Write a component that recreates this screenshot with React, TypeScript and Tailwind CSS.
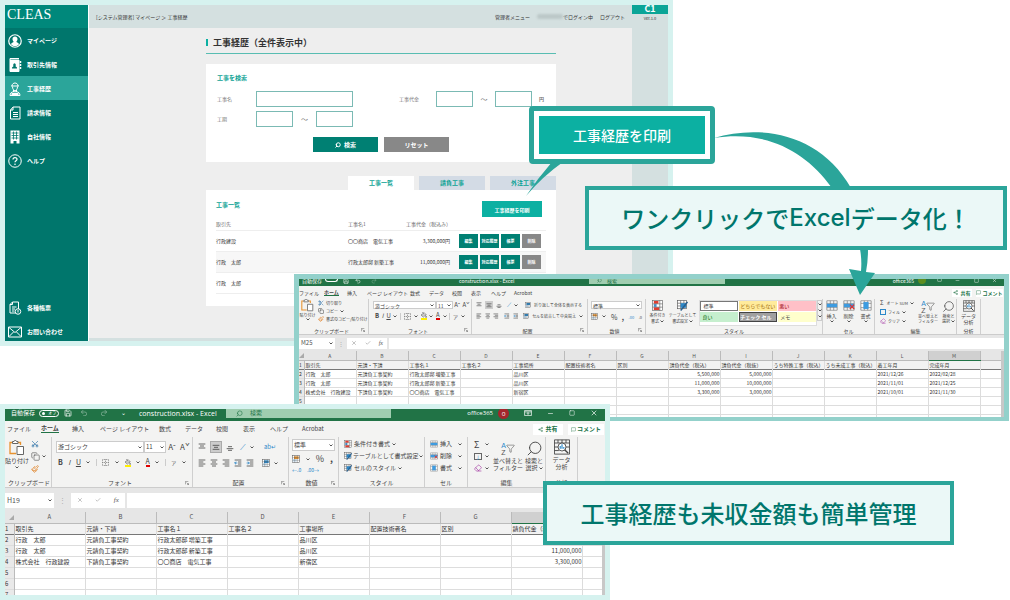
import React from "react";
import { Search, Save, Undo2, Redo2, Scissors, Copy, Paintbrush, X, Check, Minus, Square, Share2, MessageSquare, Eraser, Funnel, PaintBucket } from "lucide-react";

const jp = "font-['Noto_Sans_CJK_JP',sans-serif]";

/* ---------- small drawings ---------- */

function SideIcon({ name }: { name: string }) {
  const common = { viewBox: "0 0 28 28", fill: "none", stroke: "white", strokeWidth: 2, className: "size-[14px] shrink-0" };
  switch (name) {
    case "user":
      return (
        <svg {...common}>
          <circle cx="14" cy="14" r="12.5" strokeWidth="2.4" />
          <path d="M6 20.5c1-3 4-3.500 5.500-4.500-1.500-1.500-2.500-4-2.500-6C9 7 11 5 14 5s5 2 5 5c0 2-1 4.500-2.500 6 1.500 1 4.500 1.500 5.500 4.500-2 2.500-5 4-8 4s-6-1.500-8-4z" fill="white" stroke="none" />
        </svg>
      );
    case "book":
      return (
        <svg {...common}>
          <path d="M4 4V1h18" />
          <path d="M4 4h18v23H4z" fill="white" />
          <path d="M25 6v4M25 12v4M25 18v4" strokeWidth="3" />
          <path d="M8 21v-2l3-2.500c-1-1-1-6 2-6s3 5 2 6l3 2.500v2z" fill="#00766c" stroke="none" />
        </svg>
      );
    case "worker":
      return (
        <svg {...common}>
          <path d="M8 8c0-8 12-8 12 0M6 8h16M9 9c0 11 10 11 10 0M11 16v4M17 16v4M4 27c0-5 3-7 7-7.500h6c4 .5 7 2.500 7 7.500z" />
          <path d="M7 22h14v4H7z" fill="white" stroke="none" />
        </svg>
      );
    case "invoice":
      return (
        <svg {...common}>
          <path d="M10 2h14v24H5V8zM10 2v6H5M10 13h10M10 17h10M10 21h10" />
        </svg>
      );
    case "building":
      return (
        <svg {...common}>
          <path d="M5 1h18v26h-6v-5h-6v5H5z" fill="white" stroke="none" />
          <path d="M7 6h14M7 11h14M7 16h14M11 3v16M17 3v16" stroke="#00766c" strokeWidth="1.600" />
        </svg>
      );
    case "help":
      return (
        <svg {...common}>
          <circle cx="14" cy="14" r="12.500" />
          <path d="M10 11c0-5 8-5 8-.5 0 3-4 3-4 6" strokeWidth="2.500" />
          <circle cx="14" cy="20.500" r="1.600" fill="white" stroke="none" />
        </svg>
      );
    case "report":
      return (
        <svg {...common}>
          <path d="M16 24H4V7l5-5h12v14M9 2v5H4M8 12h9M8 16h6M8 20h5" />
          <circle cx="20" cy="21" r="5.500" />
          <path d="M20 18v5" />
        </svg>
      );
    default:
      return (
        <svg {...common}>
          <path d="M1 4h26v20H1zM2 5l12 10L26 5M2 23l9-9M26 23l-9-9" />
        </svg>
      );
  }
}

function Lines({ mode }: { mode: "top" | "mid" | "bot" | "left" | "center" | "right" | "indent" | "outdent" }) {
  const d: Record<string, string> = {
    top: "M1 1.500h10M3 4.500h6M1 7.500h10",
    mid: "M1 3.500h10M3 6.500h6M1 9.500h10",
    bot: "M3 5.500h6M1 8.500h10M3 11h6",
    left: "M1 1.500h10M1 4.500h7M1 7.500h10M1 10.500h7",
    center: "M1 1.500h10M3 4.500h6M1 7.500h10M3 10.500h6",
    right: "M1 1.500h10M4 4.500h7M1 7.500h10M4 10.500h7",
    indent: "M1 1.500h10M6 4.500h5M6 7.500h5M1 10.500h10",
    outdent: "M1 1.500h10M6 4.500h5M6 7.500h5M1 10.500h10",
  };
  return (
    <svg viewBox="0 0 12 12" className="size-full" fill="none" stroke="#444" strokeWidth="1.200">
      <path d={d[mode]} />
      {mode === "indent" && <path d="M5 6H1l2-2M1 6l2 2" stroke="#1e7fc4" />}
      {mode === "outdent" && <path d="M1 6h4L3 4M5 6L3 8" stroke="#1e7fc4" />}
    </svg>
  );
}

function Grid({ a = "#2b88c9", b = "#cfe6f7" }: { a?: string; b?: string }) {
  return (
    <svg viewBox="0 0 12 12" className="size-full" fill="none" stroke="#555" strokeWidth="0.800">
      <rect x="0.500" y="0.500" width="11" height="11" fill="white" />
      <rect x="3" y="2" width="7" height="4" fill={a} stroke="none" />
      <rect x="1" y="6" width="6" height="4" fill={b} stroke="none" />
      <path d="M.5 4h11M.5 8h11M4 .5v11M8 .5v11" strokeWidth="0.500" />
    </svg>
  );
}

function ConditionalIcon() {
  return (
    <svg viewBox="0 0 12 12" className="size-full" fill="none" stroke="#666" strokeWidth="0.700">
      <rect x="0.500" y="0.500" width="11" height="11" fill="white" />
      <path d="M2 1h5v3H2zM2 8h6v3H2z" fill="#e03c31" stroke="none" />
      <path d="M2 4.500h3v3H2z" fill="#3d8fd0" stroke="none" />
      <path d="M.5 4.200h11M.5 7.800h11M8.500 .5v11" />
    </svg>
  );
}

function TableIcon() {
  return (
    <svg viewBox="0 0 12 12" className="size-full" fill="none" stroke="#555" strokeWidth="0.700">
      <rect x="0.500" y="0.500" width="10" height="9" fill="white" />
      <path d="M.5 3.500h10M.5 6.500h10M4 .5v9M7.500 .5v9" />
      <rect x="4" y="3.500" width="6" height="5" fill="#2b88c9" stroke="none" />
      <path d="M11.500 2L6 9l-2 2.500" stroke="#2b5f8c" strokeWidth="1.600" />
    </svg>
  );
}

function CellsIcon({ cut = false, col = false }: { cut?: boolean; col?: boolean }) {
  return (
    <svg viewBox="0 0 14 12" className="size-full" fill="none" stroke="#777" strokeWidth="0.800">
      <path d="M1 .5h12v11H1zM1 3.500h12M1 8.500h12M5 .5v11M9 .5v11" fill="white" />
      <rect x={col ? 4 : 1} y={col ? 2 : 4} width={col ? 6 : 12} height={col ? 8 : 4} fill="#3d9be0" stroke="none" />
      {cut && <path d="M8 5l5 5M13 5l-5 5" stroke="#d33" strokeWidth="1.500" />}
    </svg>
  );
}

function PasteIcon() {
  return (
    <svg viewBox="0 0 16 16" className="size-full" fill="none">
      <path d="M3 2.500H1v11h6" stroke="#e8922e" strokeWidth="1.300" />
      <path d="M9 2.500h2.500V5" stroke="#e8922e" strokeWidth="1.300" />
      <path d="M3.500 3.500v-2h1.500c0-1.500 2.500-1.500 2.500 0H9v2z" fill="white" stroke="#666" />
      <path d="M8 6.500h6.500v8H8z" fill="white" stroke="#666" />
    </svg>
  );
}

function AnalysisIcon() {
  return (
    <svg viewBox="0 0 18 18" className="size-full" fill="none" stroke="#444">
      <path d="M.5 1h17v16H.5zM.5 4.500h17M.5 9h4M13.500 9h4M.5 13h5M4.500 1v3.500M9 1v3.500M13.500 1v3.500" />
      <circle cx="9" cy="9" r="4.500" fill="white" />
      <path d="M7 11V8M9 11V6M11 11V9" stroke="#2b88c9" strokeWidth="1.300" />
      <path d="M12 12l4 4" strokeWidth="1.500" />
    </svg>
  );
}

function Caret() {
  return (
    <svg viewBox="0 0 4 3" className="h-[3px] w-[4px] shrink-0" fill="none" stroke="#555" strokeWidth="1">
      <path d="M.5 .5L2 2 3.500 .5" />
    </svg>
  );
}

function Launcher() {
  return (
    <svg viewBox="0 0 6 6" className="size-[4px]" fill="none" stroke="#777">
      <path d="M.5 5V.5H5M2.500 2.500l3 3M5.500 3v2.500H3" />
    </svg>
  );
}

function RibbonToggle() {
  return (
    <svg viewBox="0 0 10 8" className="h-[6px] w-[8px]" fill="none" stroke="white">
      <path d="M.5 .5h9v7h-9zM.5 2.500h9M5 6.500V3.500M3.500 5L5 3.500 6.500 5" />
    </svg>
  );
}

function AtoZ() {
  return (
    <span className="flex items-center font-['Liberation_Sans',sans-serif]">
      <span className="flex flex-col text-[7px] leading-[7px]">
        <span className="text-[#2b88c9]">A</span>
        <span className="text-[#555]">Z</span>
      </span>
      <Funnel className="size-[9px] text-[#555]" strokeWidth={1.500} />
    </span>
  );
}

function Box({ children, big = false }: { children: React.ReactNode; big?: boolean }) {
  return <span className={big ? "block size-[16px] shrink-0" : "block size-[8px] shrink-0"}>{children}</span>;
}

/* ---------- management page window ---------- */

const nav = [
  ["user", "マイページ"],
  ["book", "取引先情報"],
  ["worker", "工事経歴"],
  ["invoice", "請求情報"],
  ["building", "自社情報"],
  ["help", "ヘルプ"],
];
const navBottom = [
  ["report", "各種帳票"],
  ["mail", "お問い合わせ"],
];

function NavItem({ icon, label, active = false }: { icon: string; label: string; active?: boolean }) {
  return (
    <a
      href="#"
      className={
        "flex h-[24px] items-center gap-[5px] pt-px pl-[3px] text-[6px] font-bold leading-none whitespace-nowrap text-white " +
        (active ? "bg-[#2ba59a]" : "")
      }
    >
      <SideIcon name={icon} />
      {label}
    </a>
  );
}

const field = "h-[16px] min-w-0 border border-[#7bbab4] bg-white text-[6px]";
const list = [
  ["行政建設", "〇〇商店　電気工事", "3,300,000円"],
  ["行政　太郎", "行政太郎邸 新築工事", "11,000,000円"],
  ["行政　太郎", "行政太郎邸 増築工事", "5,500,000円"],
];
const actions = ["編集", "対応履歴", "帳票", "削除"];

function ManagementWindow() {
  return (
    <section className={"absolute top-0 left-0 flex h-[346px] w-[673px] overflow-hidden border-5 border-[#d6f2ef] bg-[#eeeeee] text-[#333] " + jp}>
      <nav className="flex w-[84px] shrink-0 flex-col border-r border-white bg-[#00766c]">
        <h1 className="flex h-[23px] shrink-0 items-center bg-[#00887b] pb-[4px] pl-[2px] font-['Liberation_Serif',serif] text-[14px] leading-none text-white">CLEAS</h1>
        {nav.map(([i, l]) => (
          <NavItem key={l} icon={i} label={l} active={i === "worker"} />
        ))}
        <div className="mt-auto -mb-[2px]">
          {navBottom.map(([i, l]) => (
            <NavItem key={l} icon={i} label={l} />
          ))}
        </div>
      </nav>
      <div className="flex min-w-0 flex-1 flex-col">
        <header className="flex h-[23px] shrink-0 items-center justify-between bg-[#d4e0e0] pr-[7px] pl-[7px] text-[5px] leading-none">
          <span>[システム管理者] マイページ ＞ 工事経歴</span>
          <span className="flex items-center">
            <a href="#">管理者メニュー</a>
            <span className="ml-[7px] h-[5px] w-[26px] rounded-full bg-[#bcc8c8] blur-[1px]" />
            <span className="mr-[7px]">でログイン中</span>
            <a href="#">ログアウト</a>
          </span>
        </header>
        <main className="flex-1 border-b-3 border-[#d4e0e0] pr-[76px] pl-[117px]">
          <div className="flex h-[26px] items-center gap-[5px] border-b border-[#58bdb2] pt-[3px]">
            <span className="h-[7px] w-[2px] bg-[#0cb0a2]" />
            <h2 className="text-[9px] leading-none font-bold">工事経歴（全件表示中）</h2>
          </div>
          <form className="mt-[10px] h-[98px] bg-white px-[11px] pt-[10px] text-[5px] text-[#777]" onSubmit={(e) => e.preventDefault()}>
            <h3 className="text-[6px] leading-[8px] font-bold text-[#0ca294]">工事を検索</h3>
            <div className="mt-[9px] flex items-center">
              <label htmlFor="name" className="w-[39px]">工事名</label>
              <input id="name" className={field + " w-[97px]"} />
              <label htmlFor="cost" className="ml-[46px] w-[37px]">工事代金</label>
              <input id="cost" className={field + " w-[37px]"} />
              <span className="w-[22px] text-center text-[7px]">～</span>
              <input aria-label="工事代金 上限" className={field + " w-[37px]"} />
              <span className="ml-[7px] font-bold">円</span>
            </div>
            <div className="mt-[4px] flex items-center">
              <label htmlFor="term" className="w-[39px]">工期</label>
              <input id="term" className={field + " w-[37px]"} />
              <span className="w-[23px] text-center text-[7px]">～</span>
              <input aria-label="工期 終了" className={field + " w-[37px]"} />
            </div>
            <div className="mt-[10px] flex justify-center gap-[6px] text-[6px] font-bold text-white">
              <button className="flex h-[15px] w-[65px] items-center justify-center gap-[3px] bg-[#008073]"><Search className="size-[6px] -scale-x-100" strokeWidth={4} />検索</button>
              <button type="reset" className="h-[15px] w-[65px] bg-[#888] leading-none">リセット</button>
            </div>
          </form>
          <div className="mt-[14px] flex justify-end gap-[5px] text-[6px] leading-none font-bold text-[#0ca294]">
            <button className="h-[14px] w-[66px] bg-white">工事一覧</button>
            <button className="h-[14px] w-[66px] bg-[#d3dbe5]">請負工事</button>
            <button className="h-[14px] w-[66px] bg-[#d3dbe5]">外注工事</button>
          </div>
          <div className="h-[116px] bg-white px-[10px] pt-[11px]">
            <div className="flex items-start justify-between pr-[4px]">
              <h3 className="text-[6px] leading-[8px] font-bold text-[#0ca294]">工事一覧</h3>
              <button className="h-[16px] w-[60px] bg-[#0cb0a2] text-[5px] leading-none font-bold text-white">工事経歴を印刷</button>
            </div>
            <table className="mt-px w-full table-fixed text-left text-[5px] leading-none">
              <colgroup>
                <col className="w-[132px]" />
                <col className="w-[54px]" />
                <col className="w-[48px]" />
                <col />
              </colgroup>
              <thead>
                <tr className="h-[12px] border-b border-[#eee] whitespace-nowrap text-[#666]">
                  <th className="p-0 font-normal">取引先</th>
                  <th className="p-0 font-normal">工事名1</th>
                  <th className="p-0 pl-[4px] font-normal">工事代金（税込み）</th>
                  <th className="p-0" />
                </tr>
              </thead>
              <tbody>
                {list.map((r, i) => (
                  <tr key={i} className={"h-[21px] border-b border-[#eee] whitespace-nowrap " + (i === 1 ? "bg-[#f7f7f7]" : "")}>
                    <td className="p-0">{r[0]}</td>
                    <td className="p-0">{r[1]}</td>
                    <td className="p-0 text-right">{r[2]}</td>
                    <td className="p-0 pl-[9px]">
                      <span className="flex gap-[2px]">
                        {actions.map((a) => (
                          <button key={a} className={"h-[14px] w-[19px] text-[4px] leading-none font-bold text-white " + (a === "削除" ? "bg-[#888]" : "bg-[#008073]")}>{a}</button>
                        ))}
                      </span>
                    </td>
                  </tr>
                ))}
              </tbody>
            </table>
          </div>
        </main>
      </div>
      <aside className="w-[36px] shrink-0 bg-[#d4e0e0] text-center">
        <div className="flex h-[9px] items-end justify-center bg-[#0aa597] text-[9px] leading-[10px] font-bold text-white">C1</div>
        <p className="pt-[2px] text-[4px] leading-[5px]">Ver.1.0</p>
      </aside>
    </section>
  );
}

/* ---------- spreadsheet parts ---------- */

type SheetProps = {
  cols: string[];
  rows: string[][];
  small?: boolean;
  active: string;
  blank: number;
};

function Sheet({ cols, rows, small = false, active, blank }: SheetProps) {
  const h = small ? "h-[9px]" : "h-[11px]";
  const all = [...rows, ...Array.from({ length: blank }, () => [] as string[])];
  return (
    <div className="flex flex-1 overflow-hidden">
      <table className={"w-full table-fixed border-collapse bg-white text-left whitespace-nowrap text-[#333] " + (small ? "text-[5px] leading-[7px]" : "text-[6px] leading-[8px]")}>
        <colgroup>
          <col className={small ? "w-[5px]" : "w-[9px]"} />
          {cols.map((c) => (
            <col key={c} className={small ? "w-[52px]" : "w-[71px]"} />
          ))}
          <col />
        </colgroup>
        <thead>
          <tr className={"border-b border-[#bbb] bg-[#e6e6e6] text-center text-[#555] " + h}>
            <th className="p-0">
              <svg viewBox="0 0 6 6" className="ml-auto size-[5px]" fill="#aaa"><path d="M6 0v6H0z" /></svg>
            </th>
            {cols.map((c) => (
              <th key={c} className={"border-r border-[#bbb] p-0 font-normal " + (c === active ? "border-b border-b-[#217346] bg-[#d0d0d0]" : "")}>{c}</th>
            ))}
            <th className="p-0" />
          </tr>
        </thead>
        <tbody>
          {all.map((r, i) => (
            <tr key={i} className={h + " " + (i === 0 ? "border-b border-[#777] bg-[#f2f2f2]" : "border-b border-[#ddd]")}>
              <th className="border-r border-[#bbb] bg-[#e9e9e9] p-0 font-normal">{i + 1}</th>
              {cols.map((c, j) => (
                <td key={c} className={"border-r border-[#dcdcdc] p-0 pl-px " + (i > 0 && (j === 7 || j === 8) ? "text-right" : "")}>{r[j] ?? ""}</td>
              ))}
              <td className="p-0" />
            </tr>
          ))}
        </tbody>
      </table>
      <div className="w-[3px] shrink-0 bg-[#c8c8c8]" />
    </div>
  );
}

function FormulaBar({ cell, small = false }: { cell: string; small?: boolean }) {
  return (
    <div className={"flex shrink-0 items-center border-t border-[#ccc] bg-[#e6e6e6] text-[#555] " + (small ? "h-[17px] text-[6px]" : "h-[25px] text-[7px]")}>
      <div className={"flex items-center justify-between bg-white px-[2px] leading-none " + (small ? "h-[11px] w-[36px]" : "h-[15px] w-[49px]")}>
        {cell}
        <Caret />
      </div>
      <span className={"text-center text-[#aaa] " + (small ? "w-[12px]" : "w-[17px]")}>⋮</span>
      <div className={"flex items-center justify-around bg-white " + (small ? "h-[11px] w-[40px]" : "h-[15px] w-[54px]")}>
        <X className="size-[6px] text-[#888]" />
        <Check className="size-[6px] text-[#888]" />
        <i className="font-['Liberation_Serif',serif]">fx</i>
      </div>
      <input aria-label="数式バー" className={"ml-[2px] min-w-0 flex-1 bg-white " + (small ? "h-[11px]" : "h-[15px]")} />
    </div>
  );
}

function Group({ label, className, children, launcher = true }: { label: string; className: string; children: React.ReactNode; launcher?: boolean }) {
  return (
    <div className={"flex shrink-0 flex-col border-r border-[#cfcfcf] " + className}>
      <div className="min-h-0 flex-1">{children}</div>
      <div className="flex h-[8px] shrink-0 items-center px-[3px] leading-none">
        <span className="flex-1 text-center whitespace-nowrap">{label}</span>
        {launcher && <Launcher />}
      </div>
    </div>
  );
}

const tabs = ["ファイル", "ホーム", "挿入", "ページ レイアウト", "数式", "データ", "校閲", "表示", "ヘルプ", "Acrobat"];

function TabRow({ small = false }: { small?: boolean }) {
  return (
    <div className={"flex shrink-0 items-center bg-[#f3f3f2] leading-none whitespace-nowrap text-[#444] " + (small ? "h-[13px] text-[5px]" : "h-[16px] text-[6px]")}>
      <div className={"grid flex-1 items-center " + (small ? "grid-cols-[25px_23px_20px_43px_19px_23px_19px_20px_23px_1fr]" : "grid-cols-[34px_31px_28px_59px_26px_31px_27px_27px_32px_1fr] pl-[2px]")}>
        {tabs.map((t) => (
          <button key={t} className={"justify-self-start " + (t === "ホーム" ? "border-b border-[#217346] pb-px font-bold" : "")}>{t}</button>
        ))}
      </div>
      <button className={"flex items-center justify-center gap-[2px] bg-white font-bold text-[#217346] " + (small ? "h-[8px] w-[20px]" : "h-[11px] w-[30px]")}>
        <Share2 className="size-[5px]" />共有
      </button>
      <button className={"flex items-center justify-center gap-[1px] bg-white font-bold text-[#217346] " + (small ? "mr-[1px] ml-[4px] h-[8px] w-[27px]" : "mr-[1px] ml-[5px] h-[11px] w-[36px]")}>
        <MessageSquare className="size-[5px]" />コメント
      </button>
    </div>
  );
}

function FontRows({ small = false }: { small?: boolean }) {
  const sel = "flex items-center justify-between border border-[#ccc] bg-white px-[1px] leading-none " + (small ? "h-[8px]" : "h-[12px]");
  return (
    <div className={"flex h-full flex-col pl-[4px] " + (small ? "gap-[3px] pt-[2px]" : "gap-[5px] pt-[4px]")}>
      <div className="flex items-center">
        <button className={sel + (small ? " w-[63px]" : " w-[88px]")}>游ゴシック<Caret /></button>
        <button className={sel + (small ? " w-[17px]" : " w-[22px]")}>11<Caret /></button>
        <span className={"flex flex-1 justify-around leading-none " + (small ? "text-[6px]" : "text-[8px]")}><span>Aˆ</span><span>Aˇ</span></span>
      </div>
      <div className={"flex items-center justify-between pr-[6px] pl-[2px] leading-none " + (small ? "text-[6px]" : "text-[7px]")}>
        <b>B</b><i>I</i><u>U</u><Caret />
        <span className="h-[7px] w-px bg-[#ccc]" />
        <span className="size-[7px]"><svg viewBox="0 0 8 8" fill="none" stroke="#777"><path d="M.5 .5h7v7h-7zM4 .5v7M.5 4h7" strokeDasharray="1 1" /></svg></span>
        <Caret />
        <span className="border-b-2 border-[#ffef00]"><PaintBucket className="size-[6px]" /></span><Caret />
        <span className="border-b-2 border-[#e00000]">A</span><Caret />
        <span className="h-[7px] w-px bg-[#ccc]" />
        <span className="text-[5px]">ア</span><Caret />
      </div>
    </div>
  );
}

function NumberSelect({ small = false }: { small?: boolean }) {
  return (
    <button className={"flex w-full items-center justify-between border border-[#ccc] bg-white px-[1px] leading-none " + (small ? "h-[8px]" : "h-[12px]")}>
      標準<Caret />
    </button>
  );
}

const headers = ["取引先", "元請・下請", "工事名１", "工事名２", "工事場所", "配置技術者名", "区別", "請負代金（税込）", "請負代金（税抜）", "うち特殊工事（税込）", "うち未成工事（税込）", "着工年月", "完成年月"];
const data = [
  headers,
  ["行政　太郎", "元請負工事契約", "行政太郎邸 増築工事", "", "品川区", "", "", "5,500,000", "5,000,000", "", "", "2021/12/26", "2022/02/28"],
  ["行政　太郎", "元請負工事契約", "行政太郎邸 新築工事", "", "品川区", "", "", "11,000,000", "10,000,000", "", "", "2021/11/01", "2021/12/25"],
  ["株式会社　行政建設", "下請負工事契約", "〇〇商店　電気工事", "", "新宿区", "", "", "3,300,000", "3,000,000", "", "", "2021/10/01", "2021/11/30"],
];

function WideSheetWindow() {
  return (
    <section className={"absolute top-[274px] left-[294px] flex h-[147px] w-[715px] flex-col overflow-hidden border-5 border-b-4 border-[#93d1cb] bg-white text-[5px] text-[#444] " + jp}>
      <div className="flex h-[7px] shrink-0 items-start bg-[#217346] leading-[3px] text-white">
        <span className="w-[26px] pl-[3px]">自動保存</span>
        <span className="h-[3px] w-[13px] rounded-b-full border border-t-0 border-white" />
        <Save className="-mt-px ml-[5px] size-[6px]" />
        <Undo2 className="-mt-px ml-[6px] size-[6px]" />
        <Redo2 className="-mt-px ml-[10px] size-[6px] opacity-40" />
        <span className="ml-[82px] w-[130px]">construction.xlsx - Excel</span>
        <span className="flex h-[5px] w-[136px] gap-[5px] bg-[#a0cdb0] pl-[8px] text-[#217346]"><Search className="-mt-px size-[5px] -scale-x-100" />検索</span>
        <span className="ml-auto">office365</span>
        <span className="mx-[4px] h-[5px] w-[8px] rounded-b-full bg-[#5c8d1f]" />
        <span className="flex w-[74px] items-start justify-around"><Square className="-mt-[2px] size-[5px]" /><Minus className="-mt-px size-[5px]" /><Square className="-mt-px size-[5px]" /><X className="-mt-px size-[5px]" /></span>
      </div>
      <TabRow small />
      <div className="flex h-[35px] shrink-0 bg-[#f3f3f2] leading-none whitespace-nowrap">
        <Group label="クリップボード" className="w-[70px]">
          <div className="flex gap-[3px] pl-px">
            <div className="flex w-[15px] flex-col items-center gap-[1px] text-[4px]"><span className="size-[13px]"><PasteIcon /></span>貼り付け<Caret /></div>
            <div className="flex flex-col gap-[2px] pt-px text-[4px]">
              <span className="flex items-center gap-[2px]"><Scissors className="size-[6px] text-[#2b6fa8]" />切り取り</span>
              <span className="flex items-center gap-[2px]"><Copy className="size-[6px]" />コピー<Caret /></span>
              <span className="flex items-center gap-[2px]"><Paintbrush className="size-[6px] text-[#e07b1a]" />書式のコピー/貼り付け</span>
            </div>
          </div>
        </Group>
        <Group label="フォント" className="w-[103px]"><FontRows small /></Group>
        <Group label="配置" className="w-[116px]">
          <div className="flex flex-col gap-[4px] px-[4px] pt-[2px]">
            <div className="flex items-center gap-[3px]">
              <span className="size-[6px]"><Lines mode="top" /></span><span className="size-[8px] bg-[#ccc] p-px"><Lines mode="mid" /></span><span className="size-[6px]"><Lines mode="bot" /></span>
              <span className="ml-[2px] text-[6px] text-[#2b88c9]">⟋</span><Caret />
              <span className="ml-[4px] size-[6px] shrink-0"><Grid /></span><span className="text-[4px]">折り返して全体を表示する</span>
            </div>
            <div className="flex items-center gap-[3px]">
              <span className="size-[6px]"><Lines mode="left" /></span><span className="size-[6px]"><Lines mode="center" /></span><span className="size-[6px]"><Lines mode="right" /></span>
              <span className="ml-[2px] size-[6px]"><Lines mode="indent" /></span><span className="size-[6px]"><Lines mode="outdent" /></span>
              <span className="ml-[2px] size-[6px] shrink-0"><Grid /></span><span className="text-[4px]">セルを結合して中央揃え</span><Caret />
            </div>
          </div>
        </Group>
        <Group label="数値" className="w-[58px]">
          <div className="flex flex-col gap-[4px] px-[3px] pt-[2px]">
            <NumberSelect small />
            <div className="flex items-center justify-between text-[7px] leading-[6px]"><span className="size-[7px]"><Grid a="#e8922e" /></span><Caret />%<b>,</b><span className="text-[4px] text-[#2b88c9]">.00</span><span className="text-[4px]">.0</span></div>
          </div>
        </Group>
        <Group label="スタイル" className="w-[177px]" launcher={false}>
          <div className="flex h-full gap-[3px] pt-px pl-[3px]">
            <div className="flex w-[17px] flex-col items-center gap-[2px] text-[4px]"><span className="size-[11px]"><ConditionalIcon /></span><span>条件付き</span><span className="flex items-center gap-px">書式<Caret /></span></div>
            <div className="flex w-[28px] flex-col items-center gap-[2px] text-[4px]"><span className="size-[11px]"><TableIcon /></span><span>テーブルとして</span><span className="flex items-center gap-px">書式設定<Caret /></span></div>
            <div className="grid w-[119px] grid-cols-3 content-start gap-px border border-[#ddd] bg-white leading-[9px]">
              <span className="border border-[#777] pl-[2px] leading-[8px]">標準</span><span className="bg-[#ffeb9c] pl-px text-[#9c6500]">どちらでもない</span><span className="bg-[#ffc0c7] pl-px text-[#9c0006]">悪い</span>
              <span className="bg-[#c6efce] pl-[2px] text-[#006100]">良い</span><span className="border border-[#444] bg-[#a0a0a0] leading-[8px] font-bold text-white">チェック セル</span><span className="bg-[#ffffcc] pl-[2px]">メモ</span>
            </div>
            <div className="-ml-[3px] flex h-[21px] w-[5px] flex-col items-center justify-around border border-[#ccc]"><Caret /><Caret /><Caret /></div>
          </div>
        </Group>
        <Group label="セル" className="w-[52px]" launcher={false}>
          <div className="flex justify-around pt-px">
            {["挿入", "削除", "書式"].map((t, i) => (
              <span key={t} className="flex flex-col items-center gap-[2px]"><span className="h-[11px] w-[12px]"><CellsIcon cut={i === 1} col={i === 2} /></span>{t}<Caret /></span>
            ))}
          </div>
        </Group>
        <Group label="編集" className="w-[82px]" launcher={false}>
          <div className="flex gap-[4px] pt-px pl-[5px] text-[4px]">
            <div className="flex w-[34px] flex-col gap-[3px]">
              <span className="flex items-center gap-[2px]"><span className="w-[6px] text-[6px]">Σ</span>オート SUM<Caret /></span>
              <span className="flex items-center gap-[2px]"><span className="size-[6px] border border-[#2b88c9]" />フィル<Caret /></span>
              <span className="flex items-center gap-[2px]"><Eraser className="size-[6px] text-[#a63fa6]" />クリア<Caret /></span>
            </div>
            <div className="flex flex-col items-center"><span className="flex h-[13px] items-center"><AtoZ /></span><span className="leading-[6px]">並べ替えと</span><span>フィルター</span></div>
            <div className="flex flex-col items-center"><Search className="size-[13px] -scale-x-100" strokeWidth={1.300} /><span className="leading-[6px]">検索と</span><span className="flex items-center gap-px">選択<Caret /></span></div>
          </div>
        </Group>
        <Group label="分析" className="w-[24px]" launcher={false}>
          <div className="flex flex-col items-center pt-px"><span className="size-[12px]"><AnalysisIcon /></span><span className="pt-px leading-[6px]">データ</span><span>分析</span></div>
        </Group>
      </div>
      <FormulaBar cell="M25" small />
      <Sheet small cols={"ABCDEFGHIJKLM".split("")} rows={data} active="M" blank={4} />
    </section>
  );
}

function SheetWindow() {
  return (
    <section className={"absolute top-[404px] left-0 flex h-[196px] w-[610px] flex-col overflow-hidden border-5 border-[#d6f2ef] bg-white text-[6px] text-[#444] " + jp}>
      <div className="flex h-[12px] shrink-0 items-center bg-[#217346] pb-[4px] pl-[6px] leading-none text-white">
        <span className="w-[28px] whitespace-nowrap">自動保存</span>
        <span className="flex h-[7px] w-[20px] items-center justify-around rounded-full border border-white text-[4px]"><span className="size-[3px] rounded-full bg-white" />オフ</span>
        <Save className="ml-[5px] size-[8px]" />
        <Undo2 className="ml-[8px] size-[8px] opacity-50" />
        <Redo2 className="ml-[12px] size-[8px] opacity-50" />
        <span className="ml-[13px] w-[18px]">⌄</span>
        <span className="w-[87px] font-['Open_Sans',sans-serif] text-[7px] whitespace-nowrap">construction.xlsx - Excel</span>
        <span className="flex h-[10px] w-[165px] shrink-0 items-center gap-[7px] bg-[#a0cdb0] pl-[10px] text-[#217346]"><Search className="size-[7px] -scale-x-100" />検索</span>
        <span className="ml-auto font-['Open_Sans',sans-serif] text-[6px]">office365</span>
        <span className="mr-[8px] ml-[5px] flex size-[11px] items-center justify-center rounded-full bg-[#a4262c] text-[5px]">O</span>
        <span className="flex w-[88px] items-center justify-around"><RibbonToggle /><Minus className="size-[7px]" /><Square className="size-[6px]" /><X className="size-[8px]" /></span>
      </div>
      <TabRow />
      <div className="flex h-[50px] shrink-0 bg-[#f3f3f2] leading-none whitespace-nowrap">
        <Group label="クリップボード" className="w-[47px]">
          <div className="flex gap-[2px] pt-[3px]">
            <div className="flex w-[24px] flex-col items-center gap-[2px]"><Box big><PasteIcon /></Box>貼り付け<Caret /></div>
            <div className="flex flex-col gap-[4px]">
              <Scissors className="size-[8px] rotate-[-90deg] text-[#2b6fa8]" />
              <span className="flex items-center gap-[2px]"><Copy className="size-[9px]" strokeWidth={1.500} /><Caret /></span>
              <Paintbrush className="size-[8px] text-[#e07b1a]" />
            </div>
          </div>
        </Group>
        <Group label="フォント" className="w-[141px]"><FontRows /></Group>
        <Group label="配置" className="w-[96px]">
          <div className="flex flex-col gap-[6px] pt-[4px] pl-[5px]">
            <div className="flex items-center gap-[4px]">
              <Box><Lines mode="top" /></Box><span className="size-[12px] border border-[#aaa] bg-[#ccc] p-px"><Lines mode="mid" /></span><Box><Lines mode="bot" /></Box>
              <span className="ml-[2px] text-[8px] text-[#2b88c9]">⟋</span><Caret /><span className="ml-auto mr-[12px] text-[6px] text-[#2b88c9]">ab↵</span>
            </div>
            <div className="flex items-center gap-[4px]">
              <Box><Lines mode="left" /></Box><Box><Lines mode="center" /></Box><Box><Lines mode="right" /></Box>
              <Box><Lines mode="indent" /></Box><Box><Lines mode="outdent" /></Box>
              <span className="ml-[4px]"><Box><Grid /></Box></span><Caret />
            </div>
          </div>
        </Group>
        <Group label="数値" className="w-[50px]">
          <div className="flex flex-col gap-[4px] px-[3px] pt-[2px]">
            <NumberSelect />
            <div className="flex items-center justify-between pr-[2px] text-[9px] leading-[8px]"><Box><Grid a="#e8922e" /></Box><Caret />%<b>,</b></div>
            <div className="flex gap-[6px] text-[5px] text-[#2b88c9]"><span>←.0</span><span>.00→</span></div>
          </div>
        </Group>
        <Group label="スタイル" className="w-[86px]" launcher={false}>
          <div className="flex flex-col gap-[4px] pt-[3px] pl-[5px]">
            <span className="flex items-center gap-[2px]"><Box><ConditionalIcon /></Box>条件付き書式 <Caret /></span>
            <span className="flex items-center gap-px"><Box><TableIcon /></Box>テーブルとして書式設定<Caret /></span>
            <span className="flex items-center gap-[2px]"><Box><TableIcon /></Box>セルのスタイル <Caret /></span>
          </div>
        </Group>
        <Group label="セル" className="w-[43px]" launcher={false}>
          <div className="flex flex-col gap-[4px] pt-[3px] pl-[5px]">
            {["挿入", "削除", "書式"].map((t, i) => (
              <span key={t} className="flex items-center gap-[2px]"><Box><CellsIcon cut={i === 1} col={i === 2} /></Box>{t}<span className="ml-[4px]"><Caret /></span></span>
            ))}
          </div>
        </Group>
        <Group label="編集" className="w-[78px]" launcher={false}>
          <div className="flex gap-[2px] pt-[3px] pl-[6px]">
            <div className="flex w-[17px] flex-col gap-[4px]">
              <span className="flex h-[8px] items-center gap-[3px]"><span className="w-[8px] text-[9px]">Σ</span><Caret /></span>
              <span className="flex h-[8px] items-center gap-[3px]"><span className="flex h-[7px] w-[8px] items-center justify-center border border-[#666] text-[5px] text-[#2b88c9]">↓</span><Caret /></span>
              <span className="flex h-[8px] items-center gap-[3px]"><Eraser className="size-[8px] text-[#a63fa6]" /><Caret /></span>
            </div>
            <div className="flex flex-col items-center"><span className="flex h-[17px] items-center"><AtoZ /></span><span className="leading-[8px]">並べ替えと</span><span>フィルター</span></div>
            <div className="flex flex-col items-center"><Search className="size-[17px] -scale-x-100" strokeWidth={1.300} /><span className="leading-[8px]">検索と</span><span className="flex items-center gap-px">選択<Caret /></span></div>
          </div>
        </Group>
        <Group label="分析" className="w-[32px]" launcher={false}>
          <div className="flex flex-col items-center pt-[2px]"><span className="size-[16px]"><AnalysisIcon /></span><span className="pt-px leading-[8px]">データ</span><span>分析</span></div>
        </Group>
      </div>
      <FormulaBar cell="H19" />
      <Sheet cols={"ABCDEFGH".split("")} rows={data} active="H" blank={3} />
    </section>
  );
}

export default function App() {
  return (
    <div className="relative min-h-screen overflow-hidden bg-white">
      <ManagementWindow />
      <WideSheetWindow />
      <SheetWindow />
      <svg className="absolute top-0 left-0 h-[300px] w-[1010px]" viewBox="0 0 1010 300" fill="#2ba59a" aria-hidden="true">
        <path d="M552 162H563Q543 176 526 196Q538 178 552 162z" />
        <path d="M714 138C760 124 820 133 851 188L832 188C805 150 765 130 714 138z" />
        <path d="M860 249H868Q868 262 866 272L875 273L860 295L849 269L861 271Q862 260 860 249z" />
      </svg>
      <button className={"absolute top-[106px] left-[529px] rounded-[4px] border-5 border-[#2ba59a] bg-white p-[5px] " + jp}>
        <span className="flex h-[38px] w-[166px] items-center justify-center bg-[#0cb0a2] text-[14px] leading-none font-medium text-white">工事経歴を印刷</span>
      </button>
      <p className={"absolute top-[186px] left-[585px] flex h-[64px] w-[422px] items-center justify-center border-4 border-[#2ba59a] bg-[#ebf8f7] text-[24px] leading-none font-medium whitespace-nowrap text-[#00766c] " + jp}>
        ワンクリックで<span className="font-['Inter',sans-serif]">Excel</span>データ化！
      </p>
      <p className={"absolute top-[481px] left-[543px] flex h-[64px] w-[411px] items-center justify-center border-4 border-[#2ba59a] bg-[#ebf8f7] text-[24px] leading-none font-medium whitespace-nowrap text-[#00766c] " + jp}>
        工事経歴も未収金額も簡単管理
      </p>
    </div>
  );
}
